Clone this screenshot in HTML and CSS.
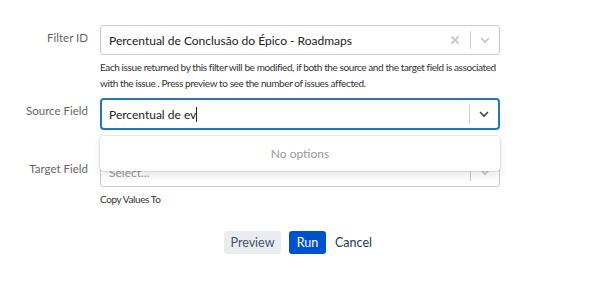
FILE: index.html
```html
<!DOCTYPE html>
<html lang="en">
<head>
    <meta charset="UTF-8">
    <title>Copy Field Values</title>
    <link rel="stylesheet" href="styles.css">
</head>
<body>
    <form class="copy-form">
        <div class="form-row">
            <label class="field-label">Filter ID</label>
            <div class="field">
                <div class="select-control">
                    <span class="select-value">Percentual de Conclusão do Épico - Roadmaps</span>
                    <span class="select-clear">
                        <svg width="10" height="10" viewBox="0 0 10 10"><path d="M1.5 1.5 L8.5 8.5 M8.5 1.5 L1.5 8.5" stroke="#c8c8c8" stroke-width="1.8"/></svg>
                    </span>
                    <span class="select-sep"></span>
                    <span class="select-arrow">
                        <svg width="12" height="8" viewBox="0 0 12 8"><path d="M2 2 L6 6 L10 2" fill="none" stroke="#c4c4c4" stroke-width="1.6"/></svg>
                    </span>
                </div>
                <p class="help-text">Each issue returned by this filter will be modified, if both the source and the target field is associated with the issue . Press preview to see the number of issues affected.</p>
            </div>
        </div>

        <div class="form-row source-row">
            <label class="field-label">Source Field</label>
            <div class="field">
                <div class="select-control focused">
                    <span class="select-value">Percentual de ev<span class="caret"></span></span>
                    <span class="select-sep"></span>
                    <span class="select-arrow">
                        <svg width="12" height="8" viewBox="0 0 12 8"><path d="M2 2 L6 6 L10 2" fill="none" stroke="#444" stroke-width="1.6"/></svg>
                    </span>
                </div>
                <div class="select-menu">No options</div>
            </div>
        </div>

        <div class="form-row target-row">
            <label class="field-label">Target Field</label>
            <div class="field">
                <div class="select-control">
                    <span class="select-placeholder">Select...</span>
                    <span class="select-sep"></span>
                    <span class="select-arrow">
                        <svg width="12" height="8" viewBox="0 0 12 8"><path d="M2 2 L6 6 L10 2" fill="none" stroke="#c4c4c4" stroke-width="1.6"/></svg>
                    </span>
                </div>
                <p class="help-text">Copy Values To</p>
            </div>
        </div>

        <div class="actions">
            <button type="button" class="btn btn-preview">Preview</button>
            <button type="button" class="btn btn-run">Run</button>
            <button type="button" class="btn btn-cancel">Cancel</button>
        </div>
    </form>
</body>
</html>
```

FILE: styles.css
```css
* {
    margin: 0;
    padding: 0;
    box-sizing: border-box;
}

body {
    background: #fff;
    font-family: Lato, "Open Sans", sans-serif;
    font-size: 12px;
    color: #172b4d;
}

.copy-form {
    padding-top: 25px;
    width: 500px;
}

.form-row {
    display: grid;
    grid-template-columns: 88px 400px;
    column-gap: 12px;
}

.field-label {
    text-align: right;
    color: #666;
    font-size: 11.5px;
    padding-top: 6px;
}

.field {
    position: relative;
}

.select-control {
    display: flex;
    align-items: center;
    height: 30px;
    border: 1px solid #cccccc;
    border-radius: 3px;
    background: #fff;
}

.select-control.focused {
    height: 32px;
    border: 2px solid #2279b8;
    border-radius: 4px;
}

.select-value,
.select-placeholder {
    flex: 1;
    padding-left: 8px;
    font-size: 12px;
    color: #222;
    white-space: nowrap;
}

.focused .select-value {
    padding-left: 7px;
}

.select-placeholder {
    color: #999;
}

.caret {
    display: inline-block;
    width: 1px;
    height: 15px;
    background: #222;
    vertical-align: -3px;
}

.select-clear {
    width: 30px;
    display: flex;
    justify-content: center;
}

.select-sep {
    width: 1px;
    height: 18px;
    background: #cccccc;
}

.select-arrow {
    width: 28px;
    display: flex;
    justify-content: center;
}

.help-text {
    font-size: 10px;
    line-height: 16px;
    color: #333;
    margin-top: 4px;
    letter-spacing: -0.4px;
}

.source-row {
    margin-top: 7px;
}

.select-menu {
    position: absolute;
    top: 38px;
    left: 0;
    width: 400px;
    height: 35px;
    background: #fff;
    border-radius: 4px;
    box-shadow: 0 0 0 1px rgba(0, 0, 0, 0.08), 0 4px 10px rgba(0, 0, 0, 0.1);
    text-align: center;
    line-height: 35px;
    color: #999;
    font-size: 12px;
    z-index: 2;
}

.target-row {
    margin-top: 27px;
}

.target-row .field-label {
    padding-top: 5px;
}

.actions {
    display: flex;
    align-items: center;
    margin-top: 24px;
    padding-left: 224px;
}

.btn {
    font-family: Lato, "Open Sans", sans-serif;
    font-size: 12.5px;
    border: none;
    border-radius: 3px;
    height: 23px;
    cursor: pointer;
}

.btn-preview {
    width: 57px;
    background: #ebecf0;
    color: #42526e;
}

.btn-run {
    width: 37px;
    margin-left: 8px;
    background: #0052cc;
    color: #fff;
}

.btn-cancel {
    margin-left: 9px;
    background: none;
    color: #253858;
}
```
